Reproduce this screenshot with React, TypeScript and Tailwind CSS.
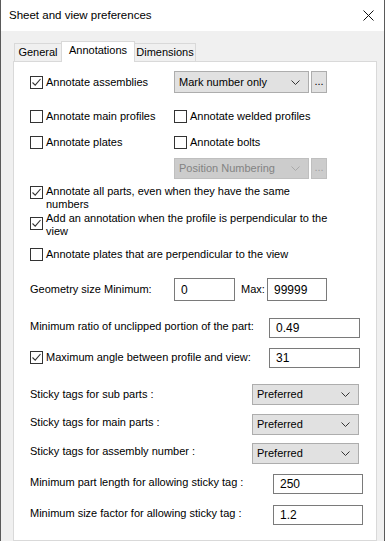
import React from "react";

const font = { fontFamily: '"Liberation Sans", Arial, sans-serif' };

const Check = ({ checked }: { checked?: boolean }) => (
    <span className="w-[13px] h-[13px] border border-[#333] bg-white shrink-0 flex items-center justify-center">
        {checked && (
            <svg width="11" height="11" viewBox="0 0 11 11">
                <path d="M1.5 5.5 L4.2 8.2 L9.5 2" fill="none" stroke="#333" strokeWidth="1.1" />
            </svg>
        )}
    </span>
);

const Chevron = ({ color = "#333" }: { color?: string }) => (
    <svg width="9" height="5" viewBox="0 0 9 5">
        <path d="M0.5 0.5 L4.5 4.5 L8.5 0.5" fill="none" stroke={color} strokeWidth="1" />
    </svg>
);

const Dropdown = ({ value, width, disabled }: { value: string; width: string; disabled?: boolean }) => (
    <div
        className={`${width} h-full flex items-center justify-between pl-[4px] pr-[8px] border text-[11px] ${
            disabled ? "bg-[#cccccc] border-[#bfbfbf] text-[#838383]" : "bg-[#e1e1e1] border-[#adadad] text-black"
        }`}
    >
        <span>{value}</span>
        <Chevron color={disabled ? "#a8a8a8" : "#333"} />
    </div>
);

const Dots = ({ disabled }: { disabled?: boolean }) => (
    <div
        className={`w-[16px] h-full ml-[2px] flex items-end justify-center pb-[5px] border text-[11px] leading-none ${
            disabled ? "bg-[#cccccc] border-[#bfbfbf] text-[#a0a0a0]" : "bg-[#e1e1e1] border-[#adadad] text-black"
        }`}
    >
        ...
    </div>
);

const Field = ({ value, width }: { value: string; width: string }) => (
    <div className={`${width} h-full flex items-center pl-[6px] border border-[#7a7a7a] bg-white text-[12px]`}>
        {value}
    </div>
);

const CheckLabel = ({ checked, children }: { checked?: boolean; children: React.ReactNode }) => (
    <div className="flex items-center gap-[3px] text-[11px]">
        <Check checked={checked} />
        <span>{children}</span>
    </div>
);

export default function App() {
    return (
        <div className="w-[385px] h-[541px] overflow-hidden bg-[#f0f0f0] border-x border-[#5a5a5a] flex flex-col text-black" style={font}>
            {/* Title bar */}
            <div className="h-[31px] bg-white flex items-center justify-between pl-[8px] pr-[10px] shrink-0">
                <span className="text-[11.5px]">Sheet and view preferences</span>
                <svg width="11" height="11" viewBox="0 0 11 11">
                    <path d="M0.5 0.5 L10.5 10.5 M10.5 0.5 L0.5 10.5" stroke="#111" strokeWidth="1" />
                </svg>
            </div>

            {/* Tabs */}
            <div className="pt-[11px] pl-[13px] flex items-end h-[31px] shrink-0 relative z-10 text-[11px]">
                <div className="w-[48px] h-[19px] border border-[#d9d9d9] bg-[#f0f0f0] flex items-center justify-center">General</div>
                <div className="w-[74px] h-[21px] -ml-px border border-b-0 border-[#d9d9d9] bg-white flex items-center justify-center pb-[3px]">Annotations</div>
                <div className="w-[62px] h-[19px] -ml-px border border-[#d9d9d9] bg-[#f0f0f0] flex items-center justify-center">Dimensions</div>
            </div>

            {/* Panel */}
            <div className="ml-[12px] w-[364px] flex-1 -mt-px bg-white border border-[#d9d9d9] pl-[16px] flex flex-col">
                <div className="mt-[9px] h-[22px] flex items-center">
                    <div className="w-[144px]"><CheckLabel checked>Annotate assemblies</CheckLabel></div>
                    <div className="flex h-full">
                        <Dropdown value="Mark number only" width="w-[135px]" />
                        <Dots />
                    </div>
                </div>

                <div className="mt-[15px] h-[16px] flex items-center">
                    <div className="w-[144px]"><CheckLabel>Annotate main profiles</CheckLabel></div>
                    <CheckLabel>Annotate welded profiles</CheckLabel>
                </div>

                <div className="mt-[10px] h-[16px] flex items-center">
                    <div className="w-[144px]"><CheckLabel>Annotate plates</CheckLabel></div>
                    <CheckLabel>Annotate bolts</CheckLabel>
                </div>

                <div className="mt-[8px] h-[21px] flex pl-[144px]">
                    <Dropdown value="Position Numbering" width="w-[135px]" disabled />
                    <Dots disabled />
                </div>

                <div className="mt-[6px] flex items-start gap-[3px] text-[11px] leading-[13px]">
                    <span className="mt-[1px]"><Check checked /></span>
                    <span>Annotate all parts, even when they have the same<br />numbers</span>
                </div>

                <div className="mt-[1px] flex items-start gap-[3px] text-[11px] leading-[13px]">
                    <span className="mt-[5px]"><Check checked /></span>
                    <span>Add an annotation when the profile is perpendicular to the<br />view</span>
                </div>

                <div className="mt-[8px] h-[16px] flex items-center">
                    <CheckLabel>Annotate plates that are perpendicular to the view</CheckLabel>
                </div>

                <div className="mt-[16px] h-[23px] flex items-center text-[11px]">
                    <span className="w-[144px]">Geometry size Minimum:</span>
                    <Field value="0" width="w-[61px]" />
                    <span className="ml-[6px] w-[26px]">Max:</span>
                    <Field value="99999" width="w-[60px]" />
                </div>

                <div className="mt-[17px] h-[20px] flex items-center text-[11px]">
                    <span className="w-[239px] -mt-[3px]">Minimum ratio of unclipped portion of the part:</span>
                    <Field value="0.49" width="w-[91px]" />
                </div>

                <div className="mt-[10px] h-[20px] flex items-center">
                    <div className="w-[239px] -mt-[1px] flex items-center gap-[3px] text-[11px]">
                        <Check checked />
                        <span>Maximum angle between profile and view:</span>
                    </div>
                    <Field value="31" width="w-[91px]" />
                </div>

                <div className="mt-[16px] h-[21px] flex items-center text-[11px]">
                    <span className="w-[222px] -mt-[1px]">Sticky tags for sub parts :</span>
                    <Dropdown value="Preferred" width="w-[107px]" />
                </div>

                <div className="mt-[9px] h-[21px] flex items-center text-[11px]">
                    <span className="w-[222px] -mt-[4px]">Sticky tags for main parts :</span>
                    <Dropdown value="Preferred" width="w-[107px]" />
                </div>

                <div className="mt-[8px] h-[21px] flex items-center text-[11px]">
                    <span className="w-[222px] -mt-[4px]">Sticky tags for assembly number :</span>
                    <Dropdown value="Preferred" width="w-[107px]" />
                </div>

                <div className="mt-[10px] h-[20px] flex items-center text-[11px]">
                    <span className="w-[243px] -mt-[4px]">Minimum part length for allowing sticky tag :</span>
                    <Field value="250" width="w-[90px]" />
                </div>

                <div className="mt-[11px] h-[20px] flex items-center text-[11px]">
                    <span className="w-[243px] -mt-[4px]">Minimum size factor for allowing sticky tag :</span>
                    <Field value="1.2" width="w-[90px]" />
                </div>
            </div>
        </div>
    );
}
